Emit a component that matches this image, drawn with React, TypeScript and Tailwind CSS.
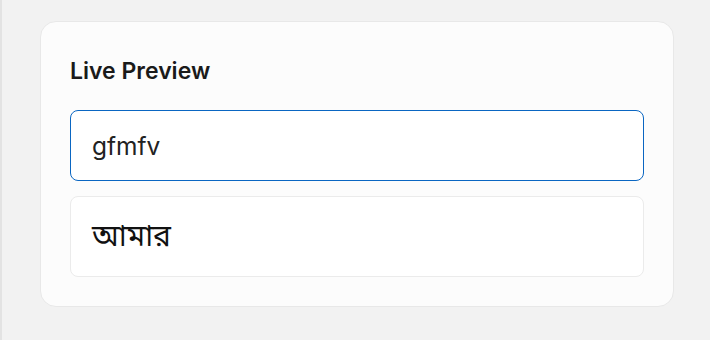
export default function App() {
  return (
    <div className="flex h-[340px] w-[710px] bg-[#f2f2f2] font-['Inter','Noto_Sans',sans-serif]">
      <div className="w-[2px] shrink-0 bg-[#e3e3e3]" />
      <div className="flex-1 pl-[38px] pr-[36px] pt-[21px]">
        <div className="rounded-[16px] border border-[#e8e8e8] bg-[#fcfcfc] px-[29px] pt-[32px] pb-[29px]">
          <h2 className="text-[23px] font-semibold leading-[34px] text-[#1a1a1a]">Live Preview</h2>
          <input
            defaultValue="gfmfv"
            className="mt-[22px] block h-[71px] w-full rounded-[8px] border border-[#0a66c2] bg-white px-[21px] text-[24.5px] text-[#222] outline-none"
          />
          <div className="mt-[15px] flex h-[81px] items-center rounded-[8px] border border-[#ebebeb] bg-white px-[21px] pb-[4px] font-['Noto_Sans','Noto_Sans_Bengali',sans-serif] text-[30px] text-[#111]">
            আমার
          </div>
        </div>
      </div>
    </div>
  )
}
